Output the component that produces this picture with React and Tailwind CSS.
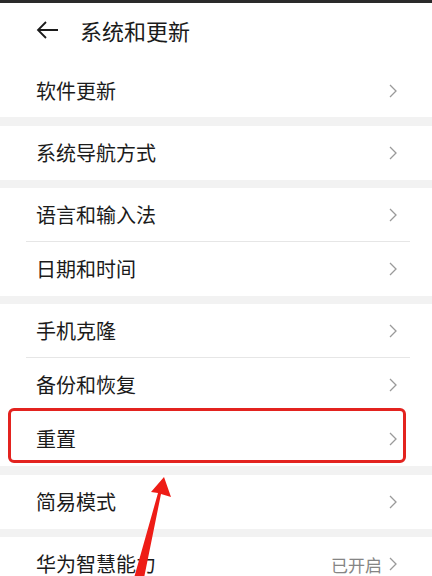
import { ChevronRight } from 'lucide-react';

const font = { fontFamily: '"Noto Sans CJK SC", "Noto Sans", sans-serif' };

function Row({ label, value, divider, h = 'h-[54px]' }) {
  return (
    <div className={`relative flex items-center ${h} pl-9 pr-[34px]`}>
      <span className="text-[20px] text-[#1b1b1b] leading-none">{label}</span>
      <div className="ml-auto flex items-center gap-[6px]">
        {value && <span className="text-[17px] text-[#858585] leading-none">{value}</span>}
        <svg width="10" height="16" viewBox="0 0 10 16" className="text-[#9a9a9a]">
          <path d="M2 2 L8 8 L2 14" fill="none" stroke="currentColor" strokeWidth="1.3" />
        </svg>
      </div>
      {divider && <div className="absolute bottom-0 left-[26px] right-[22px] h-px bg-[#e6e6e6]" />}
    </div>
  );
}

function Gap({ h = 'h-[9px]' }) {
  return <div className={`${h} bg-[#f2f2f2]`} />;
}

export default function App() {
  return (
    <div className="relative w-[432px] h-[576px] overflow-hidden bg-white" style={font}>
      <div className="h-[3px] bg-[#2a2a2a]" />
      <div className="flex items-center h-[61px] pb-[8px] pl-[36px]">
        <svg width="24" height="20" viewBox="0 0 24 20" className="text-[#1b1b1b]">
          <path d="M22 10 H2 M10 2 L2 10 L10 18" fill="none" stroke="currentColor" strokeWidth="1.8" />
        </svg>
        <span className="ml-[20px] text-[22px] text-[#1b1b1b] leading-none">系统和更新</span>
      </div>
      <Row label="软件更新" h="h-[53px]" />
      <Gap />
      <Row label="系统导航方式" />
      <Gap h="h-[8px]" />
      <Row label="语言和输入法" divider />
      <Row label="日期和时间" />
      <Gap h="h-[8px]" />
      <Row label="手机克隆" divider />
      <Row label="备份和恢复" />
      <Row label="重置" />
      <Gap />
      <Row label="简易模式" />
      <Gap h="h-[8px]" />
      <Row label="华为智慧能力" value="已开启" />

      {/* annotation box */}
      <div className="absolute left-[8px] top-[408px] w-[398px] h-[55px] border-[3px] border-[#e3231f] rounded-[6px]" />
      {/* annotation arrow */}
      <svg className="absolute left-0 top-0" width="432" height="576" viewBox="0 0 432 576">
        <polygon points="134,578 144,578 161,494 171,497 164,477 151,492 158,493" fill="#ee1c16" />
      </svg>
    </div>
  );
}
